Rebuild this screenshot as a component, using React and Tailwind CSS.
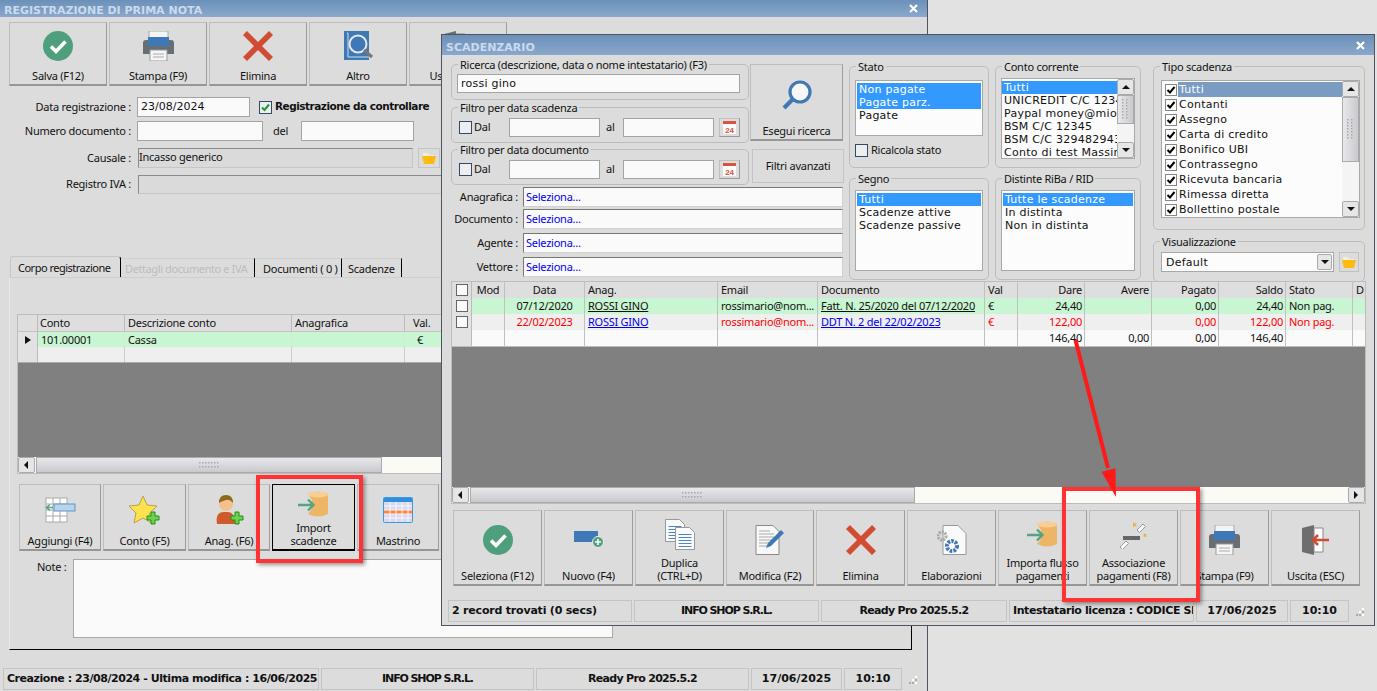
import React from "react";

const btnClass =
  "flex flex-col items-center shrink-0 bg-[#dcdcdc] border border-[#bdbdbd] border-r-[#9c9c9c] border-b-2 border-b-[#969696] text-[11px] leading-[13px] text-[#111]";
const groupClass = "border border-[#bcbcbc] rounded-[5px] min-w-0 shrink-0";
const legendClass = "ml-[6px] px-[2px] text-[11px] leading-[13px] text-[#111] whitespace-nowrap";
const inputClass = "h-[20px] bg-[#fafafa] border border-[#a3a3a3] shrink-0";
const listFont = "font-['DejaVu_Sans',sans-serif] text-[11px] leading-[13px] tracking-[0.25px]";

const CheckIcon = ({ s = 30 }) => (
  <svg width={s} height={s} viewBox="0 0 30 30">
    <circle cx="15" cy="15" r="15" fill="#4f9f7d" />
    <path d="M8 15.500l5 5 9.500-10" fill="none" stroke="#fff" strokeWidth="3.600" />
  </svg>
);
const PrintIcon = () => (
  <svg width="31" height="30" viewBox="0 0 31 30">
    <rect x="6" y="0" width="19" height="7" fill="#f4f4f4" stroke="#aaa" />
    <path d="M0 12q0-3 3-3h25q3 0 3 3v11H0z" fill="#666e76" />
    <rect x="5" y="6" width="21" height="9" fill="#3f78b6" />
    <rect x="7" y="19" width="17" height="11" fill="#f6f6f6" stroke="#999" />
    <path d="M10 23h11M10 26h11" stroke="#aaa" />
  </svg>
);
const XIcon = () => (
  <svg width="30" height="30" viewBox="0 0 30 30">
    <path d="M4 0l11 11L26 0l4 4-11 11 11 11-4 4-11-11L4 30l-4-4 11-11L0 4z" fill="#d14c30" />
  </svg>
);
const BookIcon = () => (
  <svg width="30" height="30" viewBox="0 0 30 30">
    <path d="M1 0h25v29H1z" fill="#3e78b5" />
    <path d="M4 2h1v24h22" fill="none" stroke="#cfdcea" />
    <circle cx="15" cy="13" r="8.500" fill="#3f78b8" stroke="#e8e8e8" strokeWidth="2" />
    <path d="M21 19l8 7" stroke="#777" strokeWidth="3" />
  </svg>
);
const FolderIcon = () => (
  <svg width="14" height="11" viewBox="0 0 14 11">
    <path d="M1 0h5l1 2h5v2H1z" fill="#f3efd8" />
    <path d="M0 3h14l-2 8H2z" fill="#fdbb12" />
  </svg>
);
const CalendarIcon = () => (
  <svg width="15" height="15" viewBox="0 0 15 15">
    <rect x="0.500" y="1" width="14" height="13.500" fill="#fbfbfb" stroke="#ddd" />
    <rect x="1" y="1" width="13" height="3" fill="#d9533f" />
    <text x="7.500" y="12.500" fontSize="8" fontWeight="700" fill="#d9533f" textAnchor="middle" fontFamily="Liberation Sans">24</text>
  </svg>
);
const SearchIcon = () => (
  <svg width="30" height="30" viewBox="0 0 30 30">
    <circle cx="18" cy="12" r="10" fill="#f7f7f7" stroke="#3f78b5" strokeWidth="3.200" />
    <path d="M10.500 19.500L2 28" stroke="#3f78b5" strokeWidth="4.200" />
  </svg>
);
const AddBadge = ({ x, y }) => (
  <path
    d={`M${x - 2} ${y - 6}h4v4h4v4h-4v4h-4v-4h-4v-4h4z`}
    fill="#6fd04a"
    stroke="#1f8f1f"
  />
);
const TableAddIcon = () => (
  <svg width="31" height="26" viewBox="0 0 31 26">
    <rect x="1" y="1" width="21" height="24" fill="#fff" stroke="#aaa" />
    <path d="M8 1v24M15 1v24M1 7h21M1 13h21M1 19h21" stroke="#aaa" />
    <rect x="9" y="7" width="21" height="7" fill="#b8d3ea" stroke="#5c97c6" />
    <path d="M1 10.500h7M5 7.500l-3.500 3 3.500 3" fill="none" stroke="#56a383" strokeWidth="1.600" />
  </svg>
);
const StarAddIcon = () => (
  <svg width="32" height="30" viewBox="0 0 32 30">
    <path d="M14 1l4 9 10 1-7.500 7 2 10-8.500-5-9 5 2-10L0 11l10-1z" fill="#fde24f" stroke="#b9a24a" />
    <AddBadge x={24} y={23} />
  </svg>
);
const PersonAddIcon = () => (
  <svg width="32" height="30" viewBox="0 0 32 30">
    <path d="M4 29q-2-12 7-12h4q7 0 7 12z" fill="#cf5a2c" />
    <circle cx="13" cy="9" r="7" fill="#f6bf8e" />
    <path d="M6 8q0-8 7-8t7 8q-3-4-7-3t-7 3z" fill="#8c6a1c" />
    <AddBadge x={24} y={23} />
  </svg>
);
const DbImportIcon = () => (
  <svg width="31" height="26" viewBox="0 0 31 26">
    <path d="M10 3q10-5 20 0v20q-10 5-20 0l4-5V9z" fill="#eeb566" />
    <ellipse cx="20" cy="3.500" rx="10" ry="3" fill="#f7cf95" />
    <path d="M0 14h15M10 8.500l5.500 5.500-5.500 5.500" fill="none" stroke="#56a383" strokeWidth="2.400" />
  </svg>
);
const CalGridIcon = () => (
  <svg width="30" height="26" viewBox="0 0 30 26">
    <rect x="0.500" y="0.500" width="29" height="25" rx="1" fill="#d8d8ee" stroke="#3a9ae0" />
    <rect x="1" y="1" width="28" height="4" fill="#2f8fdc" />
    <rect x="1" y="13" width="28" height="4" fill="#f58a4e" />
    <path d="M7 5v20M13 5v20M19 5v20M25 5v20M1 9h28M1 13h28M1 17h28M1 21h28" stroke="#fff" strokeWidth="0.800" />
  </svg>
);
const BoxAddIcon = () => (
  <svg width="30" height="18" viewBox="0 0 30 18">
    <rect x="0" y="0" width="24" height="11" fill="#3e78b6" />
    <circle cx="24" cy="11" r="5.500" fill="#4f9f7d" stroke="#eee" />
    <path d="M24 8v6M21 11h6" stroke="#fff" strokeWidth="1.600" />
  </svg>
);
const DocLines = ({ x, y }) => (
  <g>
    <path d={`M${x} ${y}h14l5 5v17H${x}z`} fill="#fafafa" stroke="#999" />
    <path d={`M${x + 3} ${y + 7}h13M${x + 3} ${y + 10}h13M${x + 3} ${y + 13}h13M${x + 3} ${y + 16}h13M${x + 3} ${y + 19}h13`} stroke="#4d87c0" />
  </g>
);
const DuplicateIcon = () => (
  <svg width="30" height="31" viewBox="0 0 30 31">
    <DocLines x={0.5} y={0.5} />
    <DocLines x={10.5} y={8.5} />
  </svg>
);
const EditIcon = () => (
  <svg width="30" height="30" viewBox="0 0 30 30">
    <path d="M1 0.500h17l6 6v23H1z" fill="#f8f8f8" stroke="#888" />
    <path d="M4 6h11M4 9h15M4 12h15M4 15h15M4 18h12M4 21h10" stroke="#aaa" />
    <path d="M11 23l2-5L26 5l3 3-13 13z" fill="#3f78b5" />
  </svg>
);
const GearDocIcon = () => (
  <svg width="30" height="30" viewBox="0 0 30 30">
    <path d="M6 0.500h15l8 8v21H6z" fill="#fafafa" stroke="#999" />
    <circle cx="5" cy="11" r="4" fill="none" stroke="#a8a8a8" strokeWidth="3" strokeDasharray="2 1" />
    <circle cx="15" cy="21" r="5" fill="none" stroke="#3f78b5" strokeWidth="4" strokeDasharray="2.500 1.200" />
  </svg>
);
const WandIcon = () => (
  <svg width="30" height="30" viewBox="0 0 30 30">
    <path d="M4 17h17v4H4z" fill="#666" />
    <path d="M1 28l6-6 2.500 2.500-6 6zM18 11l6-6 2.500 2.500-6 6z" fill="#f8f8f8" stroke="#999" />
    <path d="M14 3l1.500 1.500L18 4l-1.500 2L18 8l-2.500-1L14 8.500 14 6zM25 14l1 1 2 0-1 1.500 1 1.500-2-.5-1 1-.5-1.500z" fill="#edb14a" />
  </svg>
);
const DoorIcon = () => (
  <svg width="28" height="30" viewBox="0 0 28 30">
    <path d="M0 3l12-3v30L0 27z" fill="#6e6e6e" />
    <path d="M12 3h9v24h-9z" fill="#fff" stroke="#888" />
    <path d="M27 15H11M16 10l-5 5 5 5" fill="none" stroke="#d14c30" strokeWidth="2.600" />
  </svg>
);

const ToolButton = ({ icon, label, w, h, iconTop, selected }) => (
  <div
    className={`${btnClass} ${selected ? "border-black border-r-black border-b-black" : ""}`}
    style={{ width: w, height: h }}
  >
    <div className="flex justify-center" style={{ marginTop: iconTop }}>{icon}</div>
    <div className="mt-auto mb-[2px] text-center whitespace-pre-line">{label}</div>
  </div>
);

const Grip = ({ vertical }) => (
  <svg width={vertical ? 7 : 21} height={vertical ? 21 : 7}>
    {[0, 1, 2, 3, 4, 5, 6].map((i) =>
      [0, 1].map((j) => (
        <rect
          key={`${i}${j}`}
          x={vertical ? j * 4 : i * 3}
          y={vertical ? i * 3 : j * 4}
          width="1.500"
          height="1.500"
          fill="#a9a9a9"
        />
      ))
    )}
  </svg>
);

const arrowPaths = {
  left: "M6 1v8L2 5z",
  right: "M2 1v8l4-4z",
  up: "M5 3l4 4H1z",
  down: "M1 3h8L5 7z",
};
const ScrollBtn = ({ dir, className }) => (
  <div className={`flex items-center justify-center bg-[#e6e6e6] border border-[#aaa] rounded-[2px] shrink-0 ${className}`}>
    <svg width="10" height="10" viewBox="0 0 10 10"><path d={arrowPaths[dir]} fill="#111" /></svg>
  </div>
);

const Check = ({ checked, className = "" }) => (
  <div className={`w-[13px] h-[13px] border border-[#2f4a6b] bg-[#eeeeee] flex items-center justify-center shrink-0 ${className}`}>
    {checked && (
      <svg width="11" height="11" viewBox="0 0 11 11">
        <path d="M2 5.500l2.500 2.500L9 2.500" fill="none" stroke="#1f9a3a" strokeWidth="2" />
      </svg>
    )}
  </div>
);

const TitleBar = ({ title, h }) => (
  <div
    className="flex items-center justify-between bg-gradient-to-b from-[#6c90b9] to-[#8aa8cb] pl-[4px] pr-[9px] shrink-0"
    style={{ height: h }}
  >
    <span className="mt-[6px] font-['DejaVu_Sans',sans-serif] font-bold text-[11px] tracking-normal text-[#c9dbec]">{title}</span>
    <svg width="9" height="9" viewBox="0 0 9 9">
      <path d="M1 1l7 7M8 1L1 8" stroke="#fff" strokeWidth="2.200" />
    </svg>
  </div>
);

const StatusCell = ({ w, children, left, track = "tracking-[-0.2px]" }) => (
  <div
    className={`h-[22px] flex items-center border border-[#c4c4c4] font-['DejaVu_Sans',sans-serif] font-bold text-[11px] whitespace-nowrap overflow-hidden shrink-0 text-[#111] ${track} ${left ? "pl-[3px]" : "justify-center"}`}
    style={{ width: w }}
  >
    {children}
  </div>
);

const StatusGrip = () => (
  <svg width="10" height="10" className="ml-[4px] mt-[7px]">
    <rect x="7" y="1" width="2" height="2" fill="#fff" />
    <rect x="4" y="4" width="2" height="2" fill="#fff" />
    <rect x="7" y="4" width="2" height="2" fill="#aaa" />
    <rect x="1" y="7" width="2" height="2" fill="#aaa" />
    <rect x="4" y="7" width="2" height="2" fill="#aaa" />
    <rect x="7" y="7" width="2" height="2" fill="#fff" />
  </svg>
);

const FormLabel = ({ children }) => (
  <div className="w-[132px] text-right pr-[1px] shrink-0 whitespace-nowrap">{children}</div>
);

const BackWindow = () => (
  <div className="absolute left-0 top-0 w-[928px] h-[691px] bg-[#dcdcdc] border-r border-r-[#4d5560] flex flex-col text-[11px] text-[#111]">
    <TitleBar title="REGISTRAZIONE DI PRIMA NOTA" h={17} />
    <div className="flex gap-[2px] pl-[9px] pt-[5px]">
      <ToolButton w={98} h={64} iconTop={8} icon={<CheckIcon />} label="Salva (F12)" />
      <ToolButton w={98} h={64} iconTop={8} icon={<PrintIcon />} label="Stampa (F9)" />
      <ToolButton w={98} h={64} iconTop={8} icon={<XIcon />} label="Elimina" />
      <ToolButton w={98} h={64} iconTop={8} icon={<BookIcon />} label="Altro" />
      <ToolButton w={98} h={64} iconTop={8} icon={<DoorIcon />} label="Uscita (ESC)" />
    </div>
    <div className="flex items-center gap-[5px] mt-[11px] h-[20px]">
      <FormLabel>Data registrazione :</FormLabel>
      <div className={`${inputClass} w-[113px] pl-[3px] font-['DejaVu_Sans',sans-serif] tracking-normal leading-[18px]`}>23/08/2024</div>
      <Check checked className="ml-[4px]" />
      <span className="font-bold -ml-[2px] font-['DejaVu_Sans',sans-serif] text-[10.500px] tracking-[-0.5px] whitespace-nowrap">Registrazione da controllare</span>
    </div>
    <div className="flex items-center gap-[5px] mt-[4px] h-[20px]">
      <FormLabel>Numero documento :</FormLabel>
      <div className={`${inputClass} w-[126px]`} />
      <span className="ml-[5px] w-[23px]">del</span>
      <div className={`${inputClass} w-[113px]`} />
    </div>
    <div className="flex items-center gap-[6px] mt-[7px] h-[20px]">
      <FormLabel>Causale :</FormLabel>
      <div className="w-[275px] h-[20px] bg-[#dadada] border border-[#c6c6c6] border-l-[#8a8a8a] border-t-[#8a8a8a] leading-[16px]">Incasso generico</div>
      <div className="w-[22px] h-[20px] ml-[-1px] border border-[#c4c4c4] flex items-center justify-center"><FolderIcon /></div>
    </div>
    <div className="flex items-center gap-[6px] mt-[7px] h-[19px]">
      <FormLabel>Registro IVA :</FormLabel>
      <div className="w-[780px] h-[19px] bg-[#dadada] border border-[#c6c6c6] border-l-[#8a8a8a] border-t-[#8a8a8a]" />
    </div>
    {/* schede */}
    <div className="flex items-end pl-[10px] mt-[62px] h-[21px] whitespace-nowrap">
      <div className="w-[111px] h-[21px] pl-[7px] pt-[3px] tracking-[-0.5px] border-r border-r-black border-l border-t border-[#c6c6c6] rounded-t-[3px]">Corpo registrazione</div>
      <div className="w-[134px] h-[19px] pl-[4px] pt-[2px] tracking-[-0.4px] text-[#bdbdbd] border-t border-t-[#cfcfcf] border-r border-r-black">Dettagli documento e IVA</div>
      <div className="w-[87px] h-[19px] pl-[8px] pt-[2px] border-r border-r-black border-t border-t-[#cfcfcf]">Documenti ( 0 )</div>
      <div className="w-[60px] h-[19px] pl-[6px] pt-[2px] border-r border-r-black border-t border-t-[#cfcfcf]">Scadenze</div>
    </div>
    <div className="ml-[9px] w-[903px] h-[373px] border border-[#cfcfcf] border-r-black border-b-black border-l-[#e8e8e8] pl-[7px] pt-[36px] overflow-hidden flex flex-col shrink-0">
      <div className="w-[886px] h-[160px] flex flex-col border border-[#bdbdbd] shrink-0">
        <div className="grid grid-cols-[20px_87px_167px_113px_60px_1fr] h-[16px] bg-[#dedede] leading-[15px]">
          <div className="border-r border-[#bbb]" />
          <div className="border-r border-[#bbb] pl-[2px]">Conto</div>
          <div className="border-r border-[#bbb] pl-[3px]">Descrizione conto</div>
          <div className="border-r border-[#bbb] pl-[3px]">Anagrafica</div>
          <div className="border-r border-[#bbb] pl-[8px]">Val.</div>
          <div />
        </div>
        <div className="grid grid-cols-[20px_87px_167px_113px_60px_1fr] h-[16px] bg-[#c8f5d2] leading-[15px] border-t border-[#c2c2c2]">
          <div className="bg-[#e2e2e2] border-r border-[#bbb] flex items-center justify-center">
            <svg width="6" height="8" viewBox="0 0 6 8"><path d="M0 0v8l6-4z" fill="#111" /></svg>
          </div>
          <div className="pl-[3px] border-r border-[#d5e8d8]">101.00001</div>
          <div className="pl-[3px] border-r border-[#d5e8d8]">Cassa</div>
          <div className="border-r border-[#d5e8d8]" />
          <div className="pl-[12px] border-r border-[#d5e8d8]">€</div>
          <div />
        </div>
        <div className="grid grid-cols-[20px_87px_167px_113px_60px_1fr] h-[16px] bg-[#efefef] border-b border-[#aaa]">
          <div className="bg-[#e2e2e2] border-r border-[#bbb]" />
          <div className="border-r border-[#ccc]" />
          <div className="border-r border-[#ccc]" />
          <div className="border-r border-[#ccc]" />
          <div className="border-r border-[#ccc]" />
          <div />
        </div>
        <div className="flex-1 bg-[#808080]" />
        <div className="h-[16px] bg-[#fbfaf5] flex">
          <ScrollBtn dir="left" className="w-[17px]" />
          <div className="w-[346px] ml-[1px] bg-gradient-to-b from-[#e8e8ec] to-[#c9c9ce] border border-[#aaa] flex items-center justify-center"><Grip /></div>
        </div>
      </div>
      <div className="flex gap-[2px] mt-[10px] ml-[2px]">
        <ToolButton w={82} h={67} iconTop={12} icon={<TableAddIcon />} label="Aggiungi (F4)" />
        <ToolButton w={83} h={67} iconTop={10} icon={<StarAddIcon />} label="Conto (F5)" />
        <ToolButton w={82} h={67} iconTop={10} icon={<PersonAddIcon />} label="Anag. (F6)" />
        <ToolButton w={83} h={67} iconTop={6} selected icon={<DbImportIcon />} label={"Import\nscadenze"} />
        <ToolButton w={82} h={67} iconTop={12} icon={<CalGridIcon />} label="Mastrino" />
      </div>
      <div className="flex mt-[8px] ml-[20px]">
        <span className="w-[36px] whitespace-nowrap">Note :</span>
        <div className="w-[540px] h-[79px] bg-[#fafafa] border border-[#a8a8a8]" />
      </div>
    </div>
    <div className="flex gap-[2px] pl-[3px] mt-[18px]">
      <StatusCell w={316} left track="tracking-[-0.45px]">Creazione : 23/08/2024 - Ultima modifica : 16/06/2025</StatusCell>
      <StatusCell w={213} track="tracking-[-1.100px]">INFO SHOP S.R.L.</StatusCell>
      <StatusCell w={213} track="tracking-[-0.7px]">Ready Pro 2025.5.2</StatusCell>
      <StatusCell w={91} track="tracking-normal">17/06/2025</StatusCell>
      <StatusCell w={58} track="tracking-normal">10:10</StatusCell>
      <StatusGrip />
    </div>
  </div>
);

const FilterRow = ({ label, mt }) => (
  <fieldset className={`${groupClass} w-[298px] h-[42px]`} style={{ marginTop: mt }}>
    <legend className={legendClass}>{label}</legend>
    <div className="flex items-center mt-[4px] pl-[7px]">
      <Check />
      <span className="ml-[2px] w-[35px]">Dal</span>
      <div className={`${inputClass} w-[91px] !h-[19px]`} />
      <span className="w-[23px] pl-[6px]">al</span>
      <div className={`${inputClass} w-[91px] !h-[19px]`} />
      <div className="ml-[5px] w-[21px] h-[19px] border border-[#c0c0c0] border-r-[#999] border-b-[#999] flex items-center justify-center"><CalendarIcon /></div>
    </div>
  </fieldset>
);

const SelectRow = ({ label, mt }) => (
  <div className="flex items-center" style={{ marginTop: mt }}>
    <div className="w-[72px] text-right pr-[5px] shrink-0 whitespace-nowrap">{label}</div>
    <div className="w-[320px] h-[20px] bg-[#fafafa] border border-[#d0d0d0] border-l-[#777] border-t-[#777] pl-[2px] text-[#0000ee] leading-[18px]">Seleziona...</div>
  </div>
);

const ListBox = ({ w, h, items, selected = [], className = "" }) => (
  <div className={`bg-[#fcfcfc] border border-[#a8a8a8] pt-[2px] px-[1px] overflow-hidden ${listFont} ${className}`} style={{ width: w, height: h }}>
    {items.map((t, i) => (
      <div key={t} className={`h-[13px] pl-[2px] whitespace-nowrap ${selected.includes(i) ? "bg-[#3399ff] text-white" : "text-[#111]"}`}>{t}</div>
    ))}
  </div>
);

const tipi = ["Tutti", "Contanti", "Assegno", "Carta di credito", "Bonifico UBI", "Contrassegno", "Ricevuta bancaria", "Rimessa diretta", "Bollettino postale"];

const VScroll = ({ thumbH, w }) => (
  <div className="flex flex-col h-full shrink-0 bg-[#f4f4f4]" style={{ width: w }}>
    <ScrollBtn dir="up" className="h-[16px]" />
    <div className="bg-gradient-to-r from-[#e8e8ec] to-[#c9c9ce] border border-[#aaa] flex items-center justify-center" style={{ height: thumbH }}><Grip vertical /></div>
    <div className="flex-1" />
    <ScrollBtn dir="down" className="h-[16px]" />
  </div>
);

const colsClass = "grid grid-cols-[20px_33px_80px_133px_100px_167px_33px_67px_67px_67px_67px_67px_13px]";
const cellClass = "border-r border-[#c0c0c0] whitespace-nowrap overflow-hidden";

const RowCheck = () => (
  <div className="w-[12px] h-[12px] border border-[#666] bg-[#fafafa]" />
);

const PayRow = ({ bg, color, linkColor, rec }) => (
  <div className={`${colsClass} h-[16px] leading-[15px]`} style={{ backgroundColor: bg, color }}>
    <div className="bg-[#e2e2e2] border-r border-[#bbb] flex items-center justify-center"><RowCheck /></div>
    <div className={cellClass} />
    <div className={`${cellClass} text-center`}>{rec.date}</div>
    <div className={`${cellClass} pl-[3px] underline`} style={{ color: linkColor }}>ROSSI GINO</div>
    <div className={`${cellClass} pl-[3px]`}>rossimario@nom...</div>
    <div className={`${cellClass} pl-[3px] underline`} style={{ color: linkColor }}>{rec.doc}</div>
    <div className={`${cellClass} pl-[3px]`}>€</div>
    <div className={`${cellClass} text-right pr-[2px]`}>{rec.dare}</div>
    <div className={cellClass} />
    <div className={`${cellClass} text-right pr-[2px]`}>0,00</div>
    <div className={`${cellClass} text-right pr-[2px]`}>{rec.dare}</div>
    <div className={`${cellClass} pl-[3px]`}>Non pag.</div>
    <div />
  </div>
);

const FrontWindow = () => (
  <div className="absolute left-[441px] top-[34px] w-[934px] h-[592px] bg-[#dcdcdc] border border-[#4d5560] flex flex-col text-[11px] text-[#111]">
    <TitleBar title="SCADENZARIO" h={20} />
    <div className="flex pl-[9px] h-[226px] shrink-0">
      <div className="w-[392px] flex flex-col shrink-0">
        <div className="flex h-[128px]">
          <div className="flex flex-col shrink-0 w-[298px]">
            <fieldset className={`${groupClass} w-[298px] h-[42px] mt-[3px]`}>
              <legend className={legendClass}>Ricerca (descrizione, data o nome intestatario) (F3)</legend>
              <div className={`${inputClass} !h-[19px] w-[283px] ml-[5px] mt-[3px] pl-[3px] ${listFont} !leading-[17px]`}>rossi gino</div>
            </fieldset>
            <FilterRow label="Filtro per data scadenza" mt={1} />
            <FilterRow label="Filtro per data documento" mt={0} />
          </div>
          <div className="flex flex-col ml-[1px]">
            <div className={`${btnClass} w-[93px] h-[77px] mt-[9px] justify-between`}>
              <div className="mt-[15px]"><SearchIcon /></div>
              <div className="mb-[2px]">Esegui ricerca</div>
            </div>
            <div className="w-[92px] h-[34px] ml-[2px] mt-[8px] border border-[#c4c4c4] flex items-center justify-center">Filtri avanzati</div>
          </div>
        </div>
        <SelectRow label="Anagrafica :" mt={4} />
        <SelectRow label="Documento :" mt={2} />
        <SelectRow label="Agente :" mt={4} />
        <SelectRow label="Vettore :" mt={4} />
      </div>
      <div className="w-[140px] ml-[6px] shrink-0">
        <fieldset className={`${groupClass} w-[140px] h-[108px] mt-[5px]`}>
          <legend className={legendClass}>Stato</legend>
          <ListBox w={128} h={56} className="ml-[5px] mt-[7px]" items={["Non pagate", "Pagate parz.", "Pagate"]} selected={[0, 1]} />
          <div className="flex items-center ml-[5px] mt-[6px]">
            <Check />
            <span className="ml-[3px]">Ricalcola stato</span>
          </div>
        </fieldset>
        <fieldset className={`${groupClass} w-[140px] h-[108px] mt-[4px]`}>
          <legend className={legendClass}>Segno</legend>
          <ListBox w={128} h={81} className="ml-[5px] mt-[5px]" items={["Tutti", "Scadenze attive", "Scadenze passive"]} selected={[0]} />
        </fieldset>
      </div>
      <div className="w-[146px] ml-[6px] shrink-0">
        <fieldset className={`${groupClass} w-[146px] h-[108px] mt-[5px]`}>
          <legend className={legendClass}>Conto corrente</legend>
          <div className="w-[134px] h-[81px] ml-[5px] mt-[5px] flex bg-[#fcfcfc] border border-[#a8a8a8] overflow-hidden">
            <div className={`flex-1 min-w-0 overflow-hidden pt-[2px] ${listFont}`}>
              {["Tutti", "UNICREDIT C/C 12345", "Paypal money@miosito", "BSM C/C 12345", "BSM C/C 32948294399", "Conto di test Massimo"].map((t, i) => (
                <div key={t} className={`h-[13px] pl-[2px] whitespace-nowrap ${i === 0 ? "bg-[#3399ff] text-white" : ""}`}>{t}</div>
              ))}
            </div>
            <VScroll w={17} thumbH={29} />
          </div>
        </fieldset>
        <fieldset className={`${groupClass} w-[146px] h-[108px] mt-[4px]`}>
          <legend className={legendClass}>Distinte RiBa / RID</legend>
          <ListBox w={134} h={81} className="ml-[5px] mt-[5px]" items={["Tutte le scadenze", "In distinta", "Non in distinta"]} selected={[0]} />
        </fieldset>
      </div>
      <div className="w-[212px] ml-[12px] shrink-0">
        <fieldset className={`${groupClass} w-[212px] h-[170px] mt-[5px]`}>
          <legend className={legendClass}>Tipo scadenza</legend>
          <div className="w-[199px] h-[138px] ml-[7px] mt-[7px] flex bg-[#fcfcfc] border border-[#a8a8a8] overflow-hidden">
            <div className={`flex-1 pt-[1px] ${listFont}`}>
              {tipi.map((t, i) => (
                <div key={t} className="h-[15px] flex items-center pl-[3px]">
                  <div className="w-[12px] h-[12px] border border-[#888] bg-white flex items-center justify-center shrink-0">
                    <svg width="10" height="10" viewBox="0 0 10 10"><path d="M1.500 5l2.500 2.500L8.500 2" fill="none" stroke="#000" strokeWidth="2" /></svg>
                  </div>
                  <div className={`flex-1 ml-[1px] pl-[1px] h-[15px] leading-[15px] ${i === 0 ? "bg-[#7a9cc2] text-white" : ""}`}>{t}</div>
                </div>
              ))}
            </div>
            <VScroll w={17} thumbH={65} />
          </div>
        </fieldset>
        <fieldset className={`${groupClass} w-[212px] h-[47px] mt-[5px]`}>
          <legend className={legendClass}>Visualizzazione</legend>
          <div className="flex items-center ml-[7px] mt-[4px]">
            <div className={`w-[173px] h-[20px] bg-[#fcfcfc] border border-[#a8a8a8] flex items-center justify-between pl-[4px] pr-[1px] ${listFont}`}>
              Default
              <ScrollBtn dir="down" className="w-[15px] h-[16px]" />
            </div>
            <div className="w-[20px] h-[20px] ml-[5px] border border-[#c0c0c0] flex items-center justify-center"><FolderIcon /></div>
          </div>
        </fieldset>
      </div>
    </div>
    {/* griglia */}
    <div className="ml-[9px] w-[915px] h-[223px] border border-[#bdbdbd] flex flex-col shrink-0">
      <div className={`${colsClass} h-[16px] bg-[#dedede] leading-[15px]`}>
        <div className="border-r border-[#bbb] flex items-center justify-center"><RowCheck /></div>
        <div className={`${cellClass} text-center`}>Mod</div>
        <div className={`${cellClass} text-center`}>Data</div>
        <div className={`${cellClass} pl-[3px]`}>Anag.</div>
        <div className={`${cellClass} pl-[3px]`}>Email</div>
        <div className={`${cellClass} pl-[3px]`}>Documento</div>
        <div className={`${cellClass} pl-[3px]`}>Val</div>
        <div className={`${cellClass} text-right pr-[2px]`}>Dare</div>
        <div className={`${cellClass} text-right pr-[2px]`}>Avere</div>
        <div className={`${cellClass} text-right pr-[2px]`}>Pagato</div>
        <div className={`${cellClass} text-right pr-[2px]`}>Saldo</div>
        <div className={`${cellClass} pl-[3px]`}>Stato</div>
        <div className="pl-[3px]">D</div>
      </div>
      <PayRow bg="#c8f5d2" color="#111" linkColor="#111" rec={{ date: "07/12/2020", doc: "Fatt. N. 25/2020 del 07/12/2020", dare: "24,40" }} />
      <PayRow bg="#efefef" color="#ff0000" linkColor="#0000ee" rec={{ date: "22/02/2023", doc: "DDT N. 2 del 22/02/2023", dare: "122,00" }} />
      <div className={`${colsClass} h-[17px] leading-[15px] bg-[#fafafa] border-b border-[#bbb]`}>
        <div className="bg-[#e2e2e2] border-r border-[#bbb]" />
        <div className={cellClass} />
        <div className={cellClass} />
        <div className={cellClass} />
        <div className={cellClass} />
        <div className={cellClass} />
        <div className={cellClass} />
        <div className={`${cellClass} text-right pr-[2px]`}>146,40</div>
        <div className={`${cellClass} text-right pr-[2px]`}>0,00</div>
        <div className={`${cellClass} text-right pr-[2px]`}>0,00</div>
        <div className={`${cellClass} text-right pr-[2px]`}>146,40</div>
        <div className={cellClass} />
        <div />
      </div>
      <div className="flex-1 bg-[#808080]" />
      <div className="h-[16px] bg-[#fbfaf5] flex">
        <ScrollBtn dir="left" className="w-[17px]" />
        <div className="w-[445px] ml-[1px] bg-gradient-to-b from-[#e8e8ec] to-[#c9c9ce] border border-[#aaa] flex items-center justify-center"><Grip /></div>
        <ScrollBtn dir="right" className="w-[17px] ml-auto" />
      </div>
    </div>
    <div className="flex gap-[2px] ml-[11px] mt-[6px]">
      <ToolButton w={89} h={76} iconTop={14} icon={<CheckIcon />} label="Seleziona (F12)" />
      <ToolButton w={89} h={76} iconTop={20} icon={<BoxAddIcon />} label="Nuovo (F4)" />
      <ToolButton w={89} h={76} iconTop={8} icon={<DuplicateIcon />} label={"Duplica\n(CTRL+D)"} />
      <ToolButton w={88} h={76} iconTop={14} icon={<EditIcon />} label="Modifica (F2)" />
      <ToolButton w={89} h={76} iconTop={14} icon={<XIcon />} label="Elimina" />
      <ToolButton w={89} h={76} iconTop={14} icon={<GearDocIcon />} label="Elaborazioni" />
      <ToolButton w={89} h={76} iconTop={10} icon={<DbImportIcon />} label={"Importa flusso\npagamenti"} />
      <ToolButton w={89} h={76} iconTop={8} icon={<WandIcon />} label={"Associazione\npagamenti (F8)"} />
      <ToolButton w={89} h={76} iconTop={14} icon={<PrintIcon />} label="Stampa (F9)" />
      <ToolButton w={89} h={76} iconTop={14} icon={<DoorIcon />} label="Uscita (ESC)" />
    </div>
    <div className="flex gap-[2px] pl-[6px] mt-[14px]">
      <StatusCell w={184} left>2 record trovati (0 secs)</StatusCell>
      <StatusCell w={185} track="tracking-[-1.100px]">INFO SHOP S.R.L.</StatusCell>
      <StatusCell w={186} track="tracking-[-0.7px]">Ready Pro 2025.5.2</StatusCell>
      <StatusCell w={185} left track="tracking-[-0.4px]">Intestatario licenza : CODICE SRL</StatusCell>
      <StatusCell w={92} track="tracking-normal">17/06/2025</StatusCell>
      <StatusCell w={59} track="tracking-normal">10:10</StatusCell>
      <StatusGrip />
    </div>
  </div>
);

// riquadri e freccia rossi disegnati sopra le finestre
const Annotations = () => (
  <>
    <div className="absolute left-[256px] top-[475px] w-[107px] h-[88px] border-[4px] border-[#ff3333] shadow-[2px_2px_4px_rgba(0,0,0,0.4)]" />
    <div className="absolute left-[1062px] top-[487px] w-[138px] h-[115px] border-[4px] border-[#ff3333] shadow-[2px_2px_4px_rgba(0,0,0,0.4)]" />
    <svg className="absolute left-0 top-0 pointer-events-none" width="1377" height="691">
      <path d="M1075.500 340L1108 468" stroke="#ff1a1a" strokeWidth="4" />
      <path d="M1101.500 471.800L1115.500 468.200L1116 497z" fill="#ff1a1a" />
    </svg>
  </>
);

export default function App() {
  return (
    <div className="relative w-[1377px] h-[691px] overflow-hidden bg-[#e2e2e2] font-['Noto_Sans','Liberation_Sans',sans-serif] tracking-[-0.25px]">
      <BackWindow />
      <FrontWindow />
      <Annotations />
    </div>
  );
}
